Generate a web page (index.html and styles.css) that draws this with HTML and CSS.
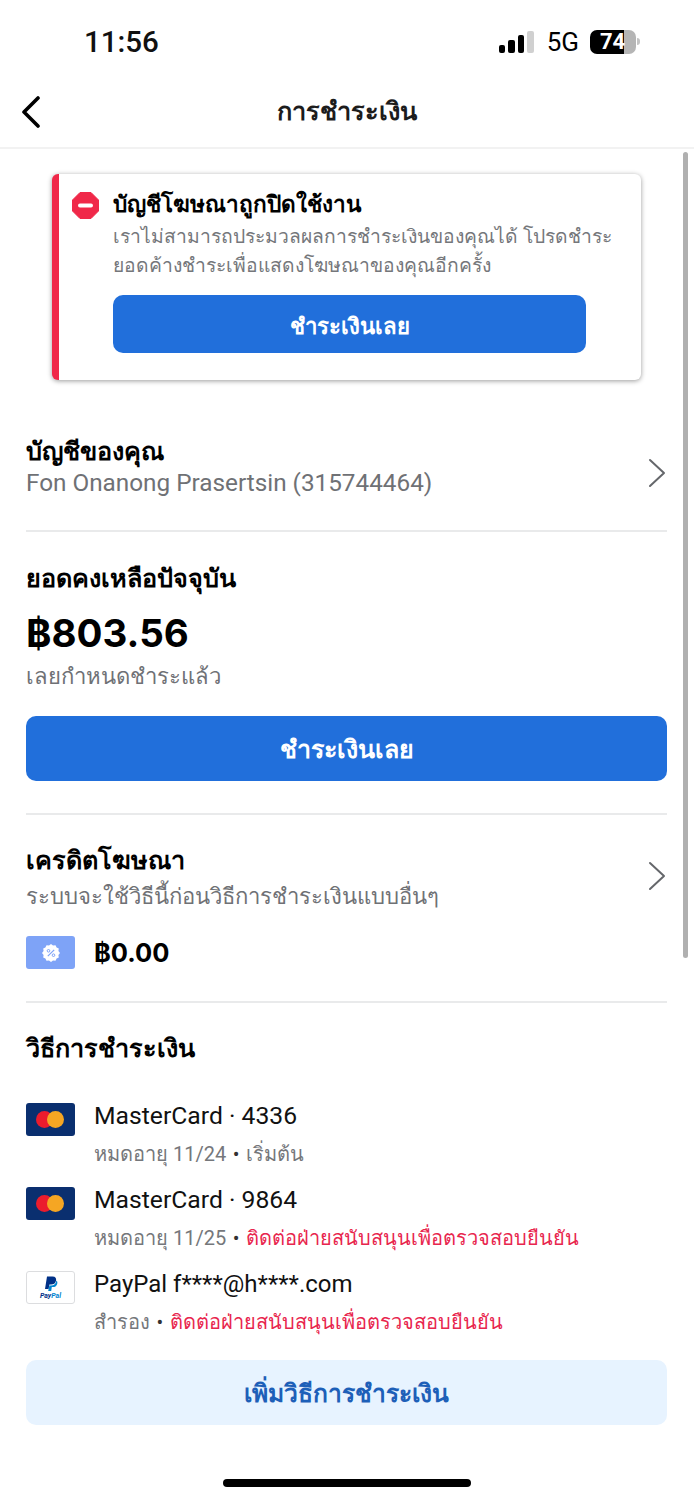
FILE: index.html
```html
<!DOCTYPE html>
<html lang="th">
<head>
    <meta charset="utf-8">
    <title>การชำระเงิน</title>
    <link rel="stylesheet" href="styles.css">
</head>
<body>
    <div class="status-bar">
        <span class="clock">11:56</span>
        <div class="status-right">
            <div class="signal"><i class="s1"></i><i class="s2"></i><i class="s3"></i><i class="s4"></i></div>
            <span class="network">5G</span>
            <div class="battery"><span class="battery-level">74</span></div>
            <div class="battery-tip"></div>
        </div>
    </div>
    <div class="nav-bar">
        <svg class="back" width="22" height="32" viewBox="0 0 22 32"><path d="M18 2 L4 16 L18 30" fill="none" stroke="#000" stroke-width="3.6" stroke-linecap="round" stroke-linejoin="round"/></svg>
        <h1>การชำระเงิน</h1>
    </div>
    <div class="scrollbar"></div>

    <div class="alert">
        <svg class="alert-icon" width="27" height="27" viewBox="0 0 27 27"><path d="M8 0.5 H19 L26.5 8 V19 L19 26.5 H8 L0.5 19 V8 Z" fill="#f02849" stroke="#f02849" stroke-linejoin="round"/><rect x="6" y="11.5" width="15" height="4" rx="2" fill="#fff"/></svg>
        <div class="alert-body">
            <h2>บัญชีโฆษณาถูกปิดใช้งาน</h2>
            <p>เราไม่สามารถประมวลผลการชำระเงินของคุณได้ โปรดชำระ<br>ยอดค้างชำระเพื่อแสดงโฆษณาของคุณอีกครั้ง</p>
            <button class="btn btn-alert">ชำระเงินเลย</button>
        </div>
    </div>

    <div class="section account">
        <div class="grow">
            <h3>บัญชีของคุณ</h3>
            <div class="sub sub-name">Fon Onanong Prasertsin (315744464)</div>
        </div>
        <svg class="chev" width="18" height="30" viewBox="0 0 18 30"><path d="M2 2 L16 15 L2 28" fill="none" stroke="#65676b" stroke-width="2" stroke-linecap="round" stroke-linejoin="round"/></svg>
    </div>

    <div class="section balance">
        <h3>ยอดคงเหลือปัจจุบัน</h3>
        <div class="amount">฿803.56</div>
        <div class="sub">เลยกำหนดชำระแล้ว</div>
        <button class="btn btn-main">ชำระเงินเลย</button>
    </div>

    <div class="section credit">
        <div class="credit-head">
            <div class="grow">
                <h3>เครดิตโฆษณา</h3>
                <div class="sub">ระบบจะใช้วิธีนี้ก่อนวิธีการชำระเงินแบบอื่นๆ</div>
            </div>
            <svg class="chev" width="18" height="30" viewBox="0 0 18 30"><path d="M2 2 L16 15 L2 28" fill="none" stroke="#65676b" stroke-width="2" stroke-linecap="round" stroke-linejoin="round"/></svg>
        </div>
        <div class="credit-row">
            <div class="card-icon card-credit">
                <svg width="20" height="20" viewBox="0 0 20 20"><path d="M10 1 L12 2.6 L14.5 2.2 L15.6 4.4 L17.8 5.5 L17.4 8 L19 10 L17.4 12 L17.8 14.5 L15.6 15.6 L14.5 17.8 L12 17.4 L10 19 L8 17.4 L5.5 17.8 L4.4 15.6 L2.2 14.5 L2.6 12 L1 10 L2.6 8 L2.2 5.5 L4.4 4.4 L5.5 2.2 L8 2.6 Z" fill="#fff"/><path d="M6.8 13.2 L13.2 6.8" stroke="#7ea3f7" stroke-width="1.2"/><circle cx="7.5" cy="7.8" r="1.3" fill="none" stroke="#7ea3f7"/><circle cx="12.5" cy="12.2" r="1.3" fill="none" stroke="#7ea3f7"/></svg>
            </div>
            <span class="credit-amount">฿0.00</span>
        </div>
    </div>

    <div class="methods">
        <h3>วิธีการชำระเงิน</h3>
        <div class="method">
            <div class="card-icon card-mc"><i class="mc-red"></i><i class="mc-yellow"></i></div>
            <div>
                <div class="method-name">MasterCard · 4336</div>
                <div class="method-sub">หมดอายุ 11/24 <span class="dot">•</span> เริ่มต้น</div>
            </div>
        </div>
        <div class="method">
            <div class="card-icon card-mc"><i class="mc-red"></i><i class="mc-yellow"></i></div>
            <div>
                <div class="method-name">MasterCard · 9864</div>
                <div class="method-sub">หมดอายุ 11/25 <span class="dot">•</span> <span class="warn">ติดต่อฝ่ายสนับสนุนเพื่อตรวจสอบยืนยัน</span></div>
            </div>
        </div>
        <div class="method">
            <div class="card-icon card-pp">
                <svg width="16" height="16" viewBox="0 0 16 16"><path d="M4 0.5 H9.5 C12.5 0.5 13.6 2.4 13 4.8 C12.4 7.4 10.5 8.6 8 8.6 H6.4 L5.6 13 H2 Z" fill="#003087"/><path d="M13.4 4.4 C14.6 5.4 14.6 7 14 8.4 C13.4 10 12 11 9.8 11 H8.8 L8.2 15 H5.2 L5.6 13 L6.4 9.4 H8 C11 9.4 13 7.6 13.4 4.4 Z" fill="#0085d0"/></svg>
                <span class="pp-word">Pay<em>Pal</em></span>
            </div>
            <div>
                <div class="method-name method-name-pp">PayPal f****@h****.com</div>
                <div class="method-sub">สำรอง <span class="dot">•</span> <span class="warn">ติดต่อฝ่ายสนับสนุนเพื่อตรวจสอบยืนยัน</span></div>
            </div>
        </div>
        <button class="btn btn-add">เพิ่มวิธีการชำระเงิน</button>
    </div>

    <div class="home-bar"></div>
</body>
</html>
```

FILE: styles.css
```css
* {
    box-sizing: border-box;
}
body {
    font-family: Roboto, "Noto Sans", "Liberation Sans", sans-serif;
    margin: 0;
    height: 1500px;
    position: relative;
    overflow: hidden;
    background: #fff;
    color: #000;
}
h1, h2, h3, p {
    margin: 0;
}

.status-bar {
    height: 75px;
    display: flex;
    justify-content: space-between;
    align-items: center;
    padding: 16px 54px 8px 84px;
}
.clock {
    font-size: 29.5px;
    font-weight: 500;
    color: #111;
}
.status-right {
    display: flex;
    align-items: center;
}
.signal {
    display: flex;
    align-items: flex-end;
    gap: 3px;
    height: 22px;
    margin-right: 13px;
}
.signal i {
    width: 6.5px;
    background: #000;
    border-radius: 2px;
}
.signal .s1 { height: 8px; }
.signal .s2 { height: 13px; }
.signal .s3 { height: 18px; }
.signal .s4 { height: 22px; background: #d0d0d0; }
.network {
    font-size: 26px;
    margin-right: 11px;
}
.battery {
    width: 46px;
    height: 24px;
    border-radius: 7px;
    background: linear-gradient(to right, #000 74%, #b5b5b5 74%);
}
.battery-level {
    display: block;
    font-size: 22px;
    font-weight: 700;
    line-height: 24px;
    color: #fff;
    padding-left: 10px;
}
.battery-tip {
    width: 3px;
    height: 7px;
    margin-left: 1px;
    background: #c4c4c4;
    border-radius: 0 3px 3px 0;
}

.nav-bar {
    height: 74px;
    display: flex;
    align-items: center;
    justify-content: center;
    position: relative;
    border-bottom: 2px solid #f2f2f2;
}
.nav-bar h1 {
    font-size: 25.3px;
    font-weight: 700;
    color: #1c1c1c;
}
.back {
    position: absolute;
    left: 20px;
    top: 21px;
}
.scrollbar {
    position: absolute;
    top: 152px;
    left: 683px;
    width: 5px;
    height: 806px;
    background: #b0b0b0;
    border-radius: 3px;
}

.alert {
    display: flex;
    margin: 25px 53px 0 52px;
    height: 206px;
    padding: 17px 55px 0 13px;
    background: #fff;
    border-left: 7px solid #f02849;
    border-radius: 6px;
    box-shadow: 0 1px 5px rgba(0,0,0,0.4);
}
.alert-icon {
    flex: none;
    margin: 1px 14px 0 0;
}
.alert-body {
    flex: 1;
    min-width: 0;
}
.alert-body h2 {
    font-size: 22.6px;
    font-weight: 700;
    line-height: 27px;
}
.alert-body p {
    font-size: 19.3px;
    line-height: 29px;
    margin-top: 4px;
    color: #75777b;
    white-space: nowrap;
}
.btn {
    display: block;
    width: 100%;
    border: 0;
    border-radius: 10px;
    font-family: inherit;
    font-weight: 700;
    color: #fff;
    background: #216fdb;
}
.btn-alert {
    height: 58px;
    margin-top: 15px;
    padding-top: 4px;
    font-size: 22.2px;
}

.section {
    margin: 0 27px 0 26px;
    border-bottom: 2px solid #e9eaeb;
}
.grow {
    flex: 1;
}
h3 {
    font-size: 25.2px;
    font-weight: 700;
    line-height: 32px;
}
.sub {
    font-size: 22.1px;
    line-height: 30px;
    color: #6f7175;
}
.sub-name {
    font-size: 24.3px;
}
.chev {
    flex: none;
    margin-right: 1px;
}
.account {
    margin-top: 56px;
    height: 96px;
    display: flex;
    align-items: flex-start;
}
.account .chev {
    margin-top: 22px;
}
.balance {
    padding-top: 31px;
    height: 283px;
}
.amount {
    font-family: Inter, Roboto, sans-serif;
    font-size: 38.5px;
    font-weight: 700;
    line-height: 56px;
    margin-top: 10px;
}
.btn-main {
    height: 65px;
    margin-top: 25px;
    padding-top: 2px;
    font-size: 25px;
}
.credit {
    height: 188px;
    padding-top: 30px;
}
.credit .sub {
    margin-top: 4px;
}
.credit-head {
    display: flex;
}
.credit-head .chev {
    margin-top: 16px;
}
.credit-row {
    display: flex;
    align-items: center;
    margin-top: 25px;
}
.card-icon {
    flex: none;
    width: 49px;
    height: 33px;
    border-radius: 3px;
    position: relative;
    margin-right: 19px;
}
.card-credit {
    background: #7ea3f7;
    display: flex;
    align-items: center;
    justify-content: center;
}
.credit-amount {
    font-family: Inter, Roboto, sans-serif;
    font-size: 25.5px;
    font-weight: 700;
}

.methods {
    margin: 0 27px 0 26px;
    padding-top: 30px;
}
.method {
    display: flex;
    height: 84px;
}
.methods h3 {
    margin-bottom: 36px;
}
.method .card-icon {
    margin-top: 2px;
}
.card-mc {
    background: #0a2f6f;
}
.mc-red, .mc-yellow {
    position: absolute;
    top: 8px;
    width: 17px;
    height: 17px;
    border-radius: 50%;
}
.mc-red { left: 10px; background: #eb1c2d; }
.mc-yellow { left: 21px; background: #f5a623; }
.card-pp {
    background: #fff;
    border: 1px solid #dcdddf;
    display: flex;
    flex-direction: column;
    align-items: center;
    justify-content: center;
}
.pp-word {
    font-size: 7px;
    font-weight: 700;
    font-style: italic;
    line-height: 8px;
    color: #003087;
}
.pp-word em {
    color: #0085d0;
}
.method-name {
    font-size: 24.7px;
    line-height: 30px;
    color: #111;
}
.method-name-pp {
    font-size: 24px;
}
.method-sub {
    font-size: 20px;
    line-height: 30px;
    margin-top: 8px;
    color: #75777b;
}
.dot {
    margin: 0 1.5px;
    color: #333;
}
.warn {
    color: #e8264e;
}
.btn-add {
    height: 65px;
    margin-top: 7px;
    padding-top: 3px;
    font-size: 24.6px;
    color: #1d5fb8;
    background: #e7f3ff;
}
.home-bar {
    position: absolute;
    left: 223px;
    top: 1479px;
    width: 248px;
    height: 8px;
    border-radius: 4px;
    background: #000;
}
```
